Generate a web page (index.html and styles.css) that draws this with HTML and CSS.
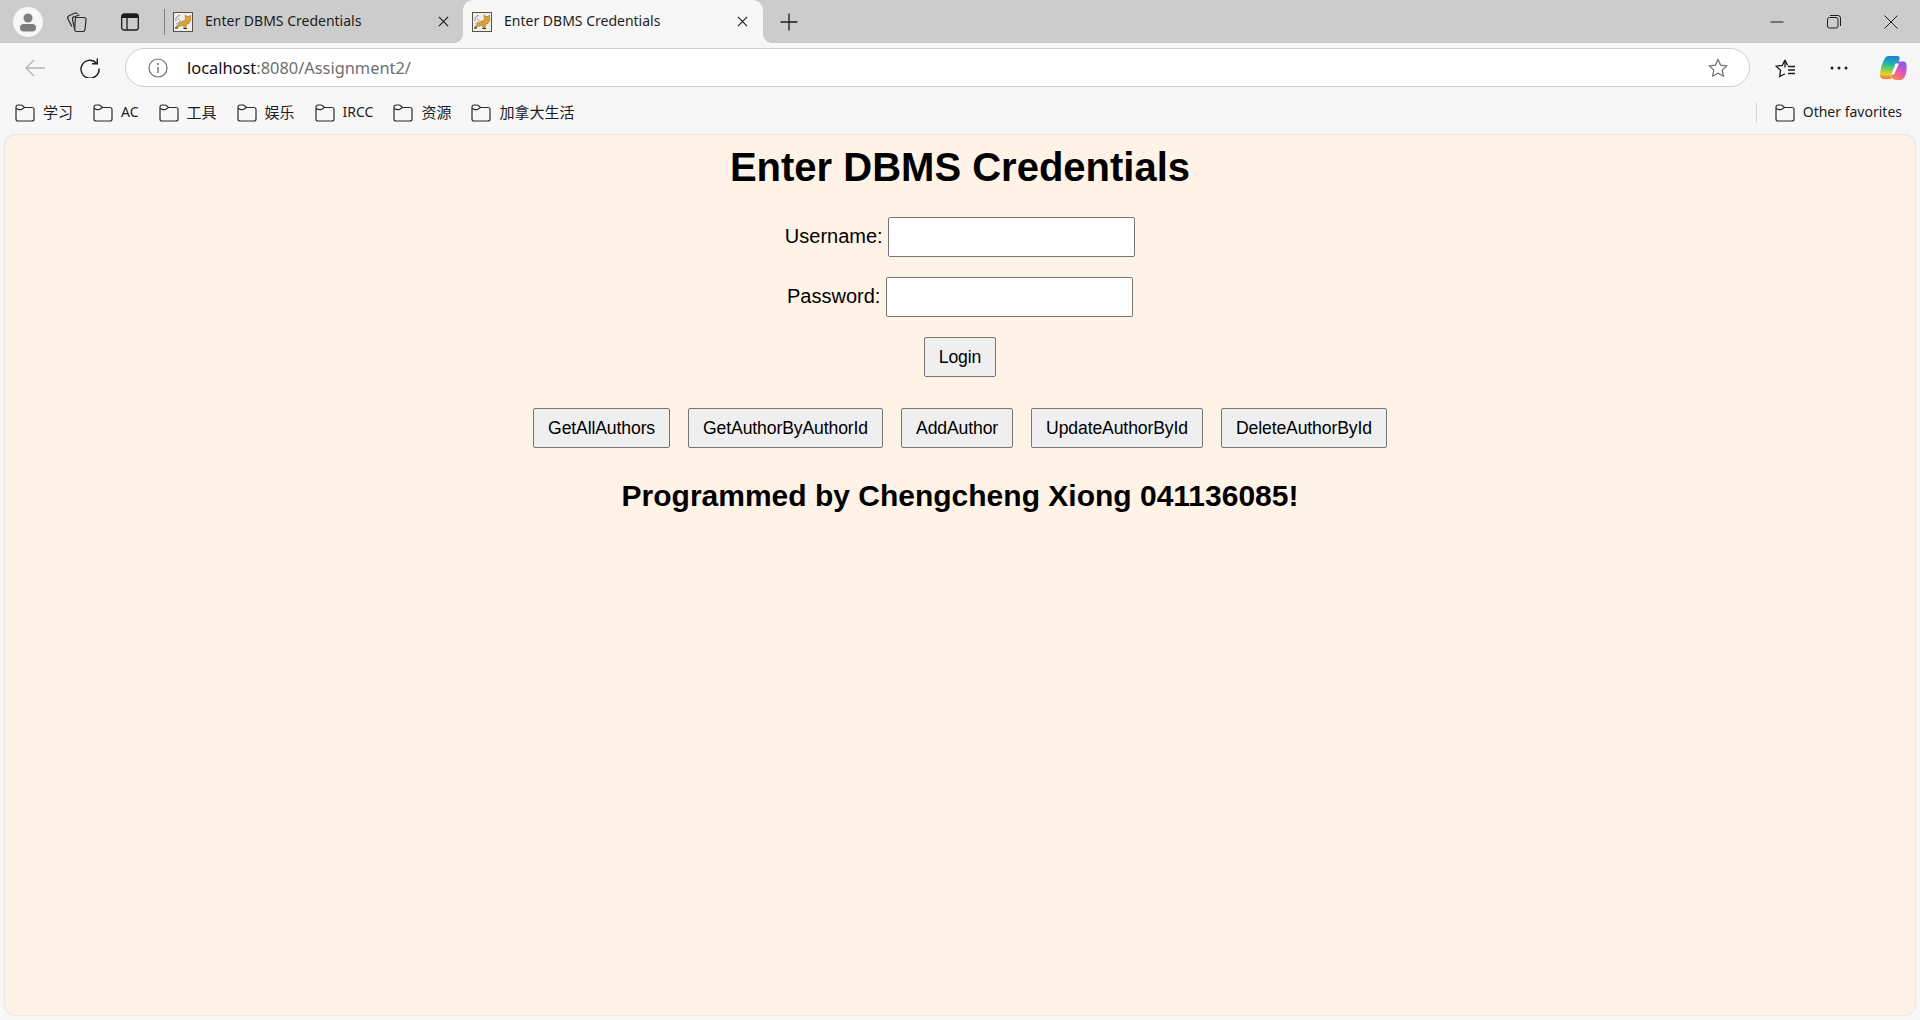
FILE: index.html
```html
<!DOCTYPE html>
<html lang="en">
<head>
    <meta charset="UTF-8">
    <title>Enter DBMS Credentials</title>
    <link rel="stylesheet" href="styles.css">
</head>
<body>
    <svg class="defs" width="0" height="0">
        <defs>
            <symbol id="folder" viewBox="0 0 20 18">
                <path d="M1 4.500V15a2 2 0 0 0 2 2h14a2 2 0 0 0 2-2V5.500a2 2 0 0 0-2-2H9.500L7.600 1.700A2.400 2.400 0 0 0 6 1H3a2 2 0 0 0-2 2v1.500Q4 6.200 6.500 5.500L9.500 3.500" fill="none" stroke="#2b2b2b" stroke-width="1.200"/>
            </symbol>
            <symbol id="tomcat" viewBox="0 0 20 20">
                <rect x="0.500" y="0.500" width="19" height="19" fill="#f1efe8" stroke="#55524a"/>
                <path d="M3 9Q2 4 7 3.500" fill="none" stroke="#8a8a8a" stroke-width="1"/>
                <path d="M2.500 15.500 6 11l5-2.500 1.500-1L12 3l2 1.500h2L17.500 3l.3 5-1.800 3.500-3 1 .5 2.500-2.500.5-1.500-2.500-3 1.500z" fill="#d9a23a" stroke="#8a6418" stroke-width=".5"/>
                <path d="M2 16h3M10.500 16.500H14" stroke="#222" stroke-width="1.200"/>
                <path d="M3 12q2-2 4-2M5 6q1 3 3 3" fill="none" stroke="#9a9a9a" stroke-width=".8"/>
            </symbol>
            <linearGradient id="copilotLeft" x1="0.500" y1="0" x2="0.400" y2="1">
                <stop offset="0" stop-color="#1f7fe0"/>
                <stop offset=".35" stop-color="#22b8a8"/>
                <stop offset=".6" stop-color="#7fd048"/>
                <stop offset=".8" stop-color="#f0cf30"/>
                <stop offset="1" stop-color="#f2703a"/>
            </linearGradient>
            <linearGradient id="copilotRight" x1="0.700" y1="0" x2="0.300" y2="1">
                <stop offset="0" stop-color="#7d5cf0"/>
                <stop offset=".55" stop-color="#e855b8"/>
                <stop offset="1" stop-color="#f68a4a"/>
            </linearGradient>
        </defs>
    </svg>

    <div class="tabstrip">
        <div class="avatar">
            <svg width="32" height="32" viewBox="0 0 32 32">
                <circle cx="16" cy="16" r="15" fill="#f7f7f7"/>
                <circle cx="16" cy="12" r="4.500" fill="#7d7d7d"/>
                <rect x="8" y="18" width="16" height="7.500" rx="3.700" fill="#7d7d7d"/>
            </svg>
        </div>
        <div class="strip-icon collections">
            <svg width="22" height="22" viewBox="0 0 22 22" fill="none" stroke="#2b2b2b" stroke-width="1.200">
                <path d="M9.500 6.500h8.500a2 2 0 0 1 2 2.200L19 18.500a2.200 2.200 0 0 1-2.200 2h-6a2.200 2.200 0 0 1-2.200-2z"/>
                <path d="M8.500 17.500 6.500 8.500a2.400 2.400 0 0 1 1.800-2.800L13.500 4"/>
                <path d="M5.800 15.500 2 8a2.400 2.400 0 0 1 1-3.200L8.500 2.200a2.400 2.400 0 0 1 3 1"/>
            </svg>
        </div>
        <div class="strip-icon vertical-tabs">
            <svg width="20" height="20" viewBox="0 0 20 20">
                <rect x="1.700" y="2" width="16.600" height="16" rx="2.500" fill="none" stroke="#1c1c1c" stroke-width="1.300"/>
                <path d="M2 4.500a2.500 2.500 0 0 1 2.500-2.500h11A2.500 2.500 0 0 1 18 4.500V6H2z" fill="#1c1c1c"/>
                <path d="M7 6v12" stroke="#1c1c1c" stroke-width="1.300"/>
            </svg>
        </div>
        <div class="tab-sep"></div>
        <div class="tab">
            <svg class="favicon"><use href="#tomcat"/></svg>
            <span class="tab-title">Enter DBMS Credentials</span>
            <svg class="tab-close" viewBox="0 0 12 12"><path d="M1 1l10 10M11 1 1 11" stroke="#1c1c1c" stroke-width="1.300"/></svg>
        </div>
        <div class="tab active">
            <svg class="favicon"><use href="#tomcat"/></svg>
            <span class="tab-title">Enter DBMS Credentials</span>
            <svg class="tab-close" viewBox="0 0 12 12"><path d="M1 1l10 10M11 1 1 11" stroke="#1c1c1c" stroke-width="1.300"/></svg>
        </div>
        <div class="new-tab">
            <svg width="18" height="18" viewBox="0 0 18 18"><path d="M9 0.500v17M0.500 9h17" stroke="#1c1c1c" stroke-width="1.300"/></svg>
        </div>
        <div class="window-controls">
            <svg width="14" height="14" viewBox="0 0 14 14"><path d="M0.500 7h13" stroke="#1c1c1c" stroke-width="1"/></svg>
            <svg width="14" height="14" viewBox="0 0 14 14" fill="none" stroke="#1c1c1c" stroke-width="1"><rect x="0.500" y="2.500" width="10.500" height="10.500" rx="2"/><path d="M3 .5h8a2.500 2.500 0 0 1 2.500 2.500v8"/></svg>
            <svg width="14" height="14" viewBox="0 0 14 14"><path d="M.5.500l13 13M13.500.500l-13 13" stroke="#1c1c1c" stroke-width="1"/></svg>
        </div>
    </div>

    <div class="toolbar">
        <div class="nav-btn back">
            <svg width="20" height="20" viewBox="0 0 20 20" fill="none" stroke="#b5b5b5" stroke-width="1.300"><path d="M1 10h19M9 2 1 10l8 8"/></svg>
        </div>
        <div class="nav-btn reload">
            <svg width="20" height="20" viewBox="0 0 20 20" fill="none" stroke="#1c1c1c" stroke-width="1.400"><path d="M16.500 5A9 9 0 1 0 19 10.500"/><path d="M17.300 0.500v5.300h-5.300"/></svg>
        </div>
        <div class="address-bar">
            <svg class="info-icon" width="20" height="20" viewBox="0 0 20 20"><circle cx="10" cy="10" r="9" fill="none" stroke="#6f6f6f" stroke-width="1.200"/><path d="M10 9v6" stroke="#6f6f6f" stroke-width="1.400"/><circle cx="10" cy="6" r="1" fill="#6f6f6f"/></svg>
            <span class="url"><span class="url-host">localhost</span>:8080/Assignment2/</span>
            <svg class="star-icon" width="20" height="20" viewBox="0 0 20 20"><path d="M10 1.500l2.600 5.600 6.100.8-4.500 4.200 1.200 6.100L10 15.200l-5.400 3 1.200-6.100L1.300 7.900l6.100-.8z" fill="none" stroke="#6f6f6f" stroke-width="1.200"/></svg>
        </div>
        <div class="tool-icons">
            <svg width="22" height="20" viewBox="0 0 22 20" fill="none" stroke="#1c1c1c" stroke-width="1.300"><path d="M11 9.500V2L8.300 7.400l-6.100.8 4.400 4.300-1 6.100 5.400-2.900"/><path d="M11 2l2.600 5.400M14 8.500h7M14 12h7M14 15.500h7"/></svg>
            <svg class="more-icon" width="18" height="4" viewBox="0 0 18 4" fill="#1c1c1c"><circle cx="2" cy="2" r="1.500"/><circle cx="9" cy="2" r="1.500"/><circle cx="16" cy="2" r="1.500"/></svg>
            <svg width="28" height="26" viewBox="0 0 28 26">
                <path d="M9 1h9q3.500 0 2.500 3l-5 15.500q-1.500 4.500-5.500 4.500H6q-5.500 0-5-5.500Q1.500 12 4 7 6.500 1 9 1z" fill="url(#copilotLeft)"/>
                <path d="M12.500 21.500q1.500 4 6 3.500h3q4-.5 5.500-6.500 1-5.500.500-9-.5-3-3-3h-5q-2 0-3 3l-4 12z" fill="url(#copilotRight)"/>
                <path d="M16.500 8.500h3.500l-5 11h-2.500z" fill="#ffffff"/>
            </svg>
        </div>
    </div>

    <div class="bookmarks">
        <a class="bookmark first"><svg class="folder"><use href="#folder"/></svg><span class="cjk">学习</span></a>
        <a class="bookmark"><svg class="folder"><use href="#folder"/></svg><span>AC</span></a>
        <a class="bookmark"><svg class="folder"><use href="#folder"/></svg><span class="cjk">工具</span></a>
        <a class="bookmark"><svg class="folder"><use href="#folder"/></svg><span class="cjk">娱乐</span></a>
        <a class="bookmark"><svg class="folder"><use href="#folder"/></svg><span>IRCC</span></a>
        <a class="bookmark"><svg class="folder"><use href="#folder"/></svg><span class="cjk">资源</span></a>
        <a class="bookmark"><svg class="folder"><use href="#folder"/></svg><span class="cjk">加拿大生活</span></a>
        <div class="bookmarks-end">
            <div class="bookmark-sep"></div>
            <a class="bookmark"><svg class="folder"><use href="#folder"/></svg><span>Other favorites</span></a>
        </div>
    </div>

    <div class="page">
        <h1>Enter DBMS Credentials</h1>
        <form class="login-form">
            <div class="form-row">
                <label for="username">Username:</label>
                <input type="text" id="username">
            </div>
            <div class="form-row">
                <label for="password">Password:</label>
                <input type="password" id="password">
            </div>
            <div class="form-row">
                <button type="button" class="login-btn">Login</button>
            </div>
        </form>
        <div class="actions">
            <button type="button">GetAllAuthors</button>
            <button type="button">GetAuthorByAuthorId</button>
            <button type="button">AddAuthor</button>
            <button type="button">UpdateAuthorById</button>
            <button type="button">DeleteAuthorById</button>
        </div>
        <h2>Programmed by Chengcheng Xiong 041136085!</h2>
    </div>
</body>
</html>
```

FILE: styles.css
```css
html, body {
    height: 100%;
}
body {
    margin: 0;
    display: flex;
    flex-direction: column;
    height: 1020px;
    overflow: hidden;
    background: #f7f7f7;
    font-family: "Noto Sans", "Noto Sans CJK SC", sans-serif;
    color: #1c1c1c;
}
.defs {
    position: absolute;
}

/* browser tabs */
.tabstrip {
    display: flex;
    align-items: center;
    height: 43px;
    background: #cccccc;
    flex-shrink: 0;
}
.avatar {
    display: flex;
    margin-left: 12px;
    width: 32px;
}
.strip-icon {
    display: flex;
}
.collections {
    margin-left: 22px;
}
.vertical-tabs {
    margin-left: 32px;
}
.tab-sep {
    width: 1px;
    height: 26px;
    margin-left: 24px;
    background: #808080;
}
.tab {
    position: relative;
    display: flex;
    align-items: center;
    align-self: stretch;
    box-sizing: border-box;
    width: 298px;
    padding: 0 14px 0 8px;
    font-size: 14px;
}
.tab.active {
    width: 300px;
    padding-left: 9px;
    padding-right: 15px;
    background: #f7f7f7;
    border-radius: 10px 10px 0 0;
}
.tab.active::before,
.tab.active::after {
    content: "";
    position: absolute;
    bottom: 0;
    width: 10px;
    height: 10px;
}
.tab.active::before {
    left: -10px;
    background: radial-gradient(circle at 0 0, #cccccc 10px, #f7f7f7 10.500px);
}
.tab.active::after {
    right: -10px;
    background: radial-gradient(circle at 100% 0, #cccccc 10px, #f7f7f7 10.500px);
}
.favicon {
    width: 20px;
    height: 20px;
    flex-shrink: 0;
}
.tab-title {
    flex: 1;
    margin-left: 12px;
    padding-bottom: 2px;
    white-space: nowrap;
}
.tab-close {
    width: 11px;
    height: 11px;
    flex-shrink: 0;
}
.new-tab {
    display: flex;
    margin-left: 17px;
}
.window-controls {
    display: flex;
    gap: 43px;
    margin-left: auto;
    margin-right: 22px;
}

/* address bar row */
.toolbar {
    display: flex;
    align-items: center;
    height: 49px;
    flex-shrink: 0;
}
.nav-btn {
    display: flex;
}
.back {
    margin-left: 25px;
}
.reload {
    margin-left: 35px;
}
.address-bar {
    display: flex;
    align-items: center;
    box-sizing: border-box;
    width: 1625px;
    height: 39px;
    margin-left: 25px;
    padding: 0 21px 0 22px;
    background: #ffffff;
    border: 1px solid #cfcfcf;
    border-radius: 20px;
}
.url {
    margin-left: 19px;
    font-size: 16.400px;
    color: #6f6f6f;
}
.url-host {
    color: #111111;
}
.star-icon {
    margin-left: auto;
}
.tool-icons {
    display: flex;
    align-items: center;
    margin-left: 24px;
    gap: 31px;
}
.more-icon {
    margin-left: 3px;
}

/* favourites bar */
.bookmarks {
    display: flex;
    align-items: center;
    height: 42px;
    padding-left: 15px;
    font-size: 14px;
    flex-shrink: 0;
}
.bookmark {
    display: flex;
    align-items: center;
    gap: 8px;
    margin-right: 20px;
    white-space: nowrap;
}
.bookmark span {
    padding-bottom: 4px;
}
.bookmark .cjk {
    font-size: 15px;
}
.folder {
    width: 20px;
    height: 18px;
    flex-shrink: 0;
}
.bookmarks-end {
    display: flex;
    align-items: center;
    margin-left: auto;
}
.bookmark-sep {
    width: 1px;
    height: 20px;
    margin-right: 18px;
    background: #d4d4d4;
}
.bookmarks-end .bookmark {
    margin-right: 18px;
}

/* the page itself */
.page {
    box-sizing: border-box;
    height: 880px;
    margin: 1px 5px 0;
    padding-top: 1px;
    text-align: center;
    font-family: "Liberation Sans", Arial, sans-serif;
    color: #000000;
    background: #fff2e6;
    border-radius: 10px;
    box-shadow: 0 0 2px rgba(0, 0, 0, 0.200);
}
h1 {
    margin: 8px 0 27px;
    font-size: 40px;
    line-height: 46px;
}
.form-row {
    height: 40px;
    margin-bottom: 20px;
    font-size: 20px;
}
.form-row input {
    box-sizing: border-box;
    width: 247px;
    height: 40px;
    vertical-align: middle;
    background: #ffffff;
    border: 1px solid #767676;
    border-radius: 2px;
}
.form-row label {
    display: inline-block;
    padding-bottom: 2px;
    vertical-align: middle;
}
button {
    box-sizing: border-box;
    height: 40px;
    padding: 0 14px;
    font-family: "Liberation Sans", Arial, sans-serif;
    font-size: 17.600px;
    letter-spacing: -0.120px;
    color: #000000;
    background: #efefef;
    border: 1px solid #767676;
    border-radius: 2px;
}
.actions {
    display: flex;
    justify-content: center;
    gap: 18px;
    margin-top: 31px;
}
h2 {
    margin: 31px 0 0;
    font-size: 30px;
    line-height: 34px;
}
```
